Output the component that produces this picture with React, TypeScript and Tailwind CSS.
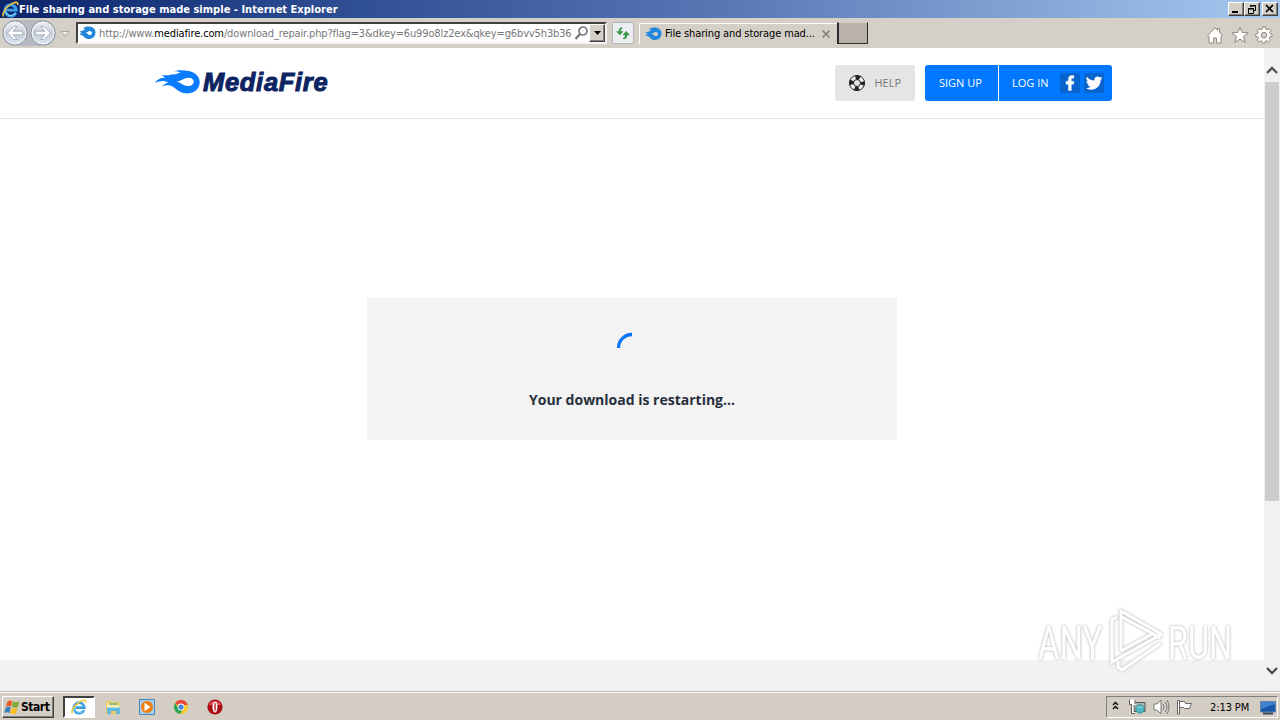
import React from "react";

const ui = "font-['DejaVu_Sans_Condensed','DejaVu_Sans',sans-serif]";

function IELogo({ size = 16 }: { size?: number }) {
  return (
    <svg width={size} height={size} viewBox="0 0 16 16" className="block shrink-0" fill="none">
      <path d="M13 11A5.300 5.300 0 1 1 13.400 8.600H4.500" stroke="#3a9fe4" strokeWidth="2.700" />
      <path d="M12.700 11A5 5 0 0 1 3.600 7" stroke="#8ad4f7" strokeWidth="1" />
      <path d="M1.600 14.500C-.6 12.500 3.200 6.300 8.500 3c3.600-2.300 6.800-2.600 6.300.8" stroke="#efc43d" strokeWidth="1.500" />
    </svg>
  );
}

function Flame({ w, h }: { w: number; h: number }) {
  return (
    <svg width={w} height={h} viewBox="0 0 45 25" className="block shrink-0" preserveAspectRatio="none">
      <path
        fillRule="evenodd"
        fill="#0a7cff"
        d="M16 4.600C20 5.400 23 3.800 25.500 2.400 23.400 1.500 20.200 1 18.200 1.400 22.200-.2 28-.1 32.500.7 39.800 1.900 44.700 6.400 44.700 12.600 44.700 19.500 39.600 24.400 32.500 24.400 25.700 24.400 22.300 20.800 18.600 18 15.500 15.600 11.200 15.300 7.200 17.200 8.700 15 11 13.700 13.500 13.100 9.200 10.600 4.500 11 0 13.500 2.100 9.800 5.800 8.100 10 8.200 8.900 6.900 7.700 6 6.400 5.500 10 4.900 12.700 6.300 16 4.600ZM21.500 11.900C25.200 12.700 28.500 16.600 33 16.600 36.400 16.600 38.700 14.600 38.700 12.200 38.700 9.700 36.700 8 33.600 8 29.500 8 26.400 11.400 21.500 11.900Z"
      />
    </svg>
  );
}

function FlameBadge() {
  return (
    <svg width="17" height="16" viewBox="0 0 17 16" className="block shrink-0">
      <path
        fillRule="evenodd"
        fill="#2186dc"
        d="M4.200 3.200C5.800 1.700 8 1.300 10.400 1.500c3.600.3 6.100 2.700 6.100 6.100 0 3.800-2.800 6.400-6.400 6.400-3.800 0-5-2.500-6.300-3.300C2.700 10 1.700 9.600.4 9.800c.7-1 1.600-1.500 2.600-1.700C2 7.300 1 7 .1 7 2 5.400 4.400 6 6 4.500c-.6-.4-1.100-.8-1.800-1.300ZM7 7.600c1.200.7 1.900 2.500 3.700 2.500 1.300 0 2.200-.9 2.200-2.100 0-1.200-.9-2-2.200-2C9.300 6 8.600 7.400 7 7.600Z"
      />
    </svg>
  );
}

function NavArrow({ flip = false }: { flip?: boolean }) {
  return (
    <svg width="26" height="26" viewBox="0 0 26 26" className="block shrink-0">
      <defs>
        <linearGradient id={flip ? "navF" : "navB"} x1="0" y1="0" x2="0" y2="1">
          <stop offset="0" stopColor="#f4f5f8" />
          <stop offset=".5" stopColor="#c3cbd7" />
          <stop offset="1" stopColor="#dfe8f3" />
        </linearGradient>
      </defs>
      <circle cx="13" cy="13" r="12" fill={flip ? "url(#navF)" : "url(#navB)"} stroke="#8d94a1" />
      <circle cx="13" cy="13" r="10.900" fill="none" stroke="#f4f7fb" strokeWidth="1" />
      <path
        transform={flip ? "translate(26 0) scale(-1 1)" : undefined}
        d="M5.500 13 12 6.500h3.200L11 11.200h9.500v3.600H11l4.200 4.700H12Z"
        fill="#fff"
        stroke="#9aa4b3"
        strokeWidth=".8"
      />
    </svg>
  );
}

function CaptionButton({ children }: { children: React.ReactNode }) {
  return (
    <div className="flex h-[14px] w-4 items-center justify-center border border-t-white border-r-[#404040] border-b-[#404040] border-l-white bg-[#d4d0c8] shadow-[inset_-1px_-1px_0_#808080]">
      {children}
    </div>
  );
}

function TitleBar() {
  return (
    <div className={`flex h-[18px] items-center bg-[linear-gradient(90deg,#0b246a_0%,#25448a_20%,#5575b3_55%,#a6caf0_100%)] pr-[2px] pl-[2px] ${ui}`}>
      <IELogo size={17} />
      <span className="pt-px text-[11px] leading-[17px] font-bold tracking-[0.020px] whitespace-nowrap text-white">
        File sharing and storage made simple - Internet Explorer
      </span>
      <div className="ml-auto flex">
        <CaptionButton>
          <svg width="12" height="10" viewBox="0 0 12 10"><path d="M2 7h6v2H2z" /></svg>
        </CaptionButton>
        <CaptionButton>
          <svg width="12" height="11" viewBox="0 0 12 11" fill="none" stroke="#000">
            <path d="M4.500 3V1.500h5v5H8M4 2h6" /><path d="M2.500 4.500h5v5h-5zM2 5h6" />
          </svg>
        </CaptionButton>
        <div className="ml-[2px]">
          <CaptionButton>
            <svg width="10" height="10" viewBox="0 0 10 10"><path d="m1 1 7 7M8 1 1 8" stroke="#000" strokeWidth="1.700" /></svg>
          </CaptionButton>
        </div>
      </div>
    </div>
  );
}

function Toolbar() {
  return (
    <div className={`flex h-[30px] bg-[#d4d0c8] text-[11px] ${ui}`}>
      <div className="mt-[2px] ml-[2px] flex h-[26px] w-[54px] justify-between rounded-full bg-[#b7b9c0]">
        <NavArrow />
        <NavArrow flip />
      </div>
      <svg width="10" height="6" viewBox="0 0 10 6" className="mt-[13px] ml-[4px]"><path d="M1 .5h8L5 5Z" fill="#eee" stroke="#aaa69f" /></svg>
      <div className="mt-[4px] ml-[6px] flex h-[22px] w-[531px] items-center border-2 border-t-[#404040] border-r-[#f4f3f0] border-b-[#f4f3f0] border-l-[#404040] bg-white pl-px">
        <FlameBadge />
        <div className="ml-[3px] w-[474px] pt-px leading-[18px] tracking-[-0.130px] whitespace-nowrap text-[#77777a]">
          http://www.<span className="text-black">mediafire.com</span>/download_repair.php?flag=3&amp;dkey=6u99o8lz2ex&amp;qkey=g6bvv5h3b36
        </div>
        <svg width="15" height="16" viewBox="0 0 15 16" className="ml-[2px] shrink-0" fill="none" stroke="#77777c">
          <circle cx="9" cy="6" r="4" strokeWidth="1.700" /><path d="m6 9-4.500 5" strokeWidth="2.300" />
        </svg>
        <div className="ml-auto flex h-[18px] w-4 items-center justify-center border border-t-white border-r-[#404040] border-b-[#404040] border-l-white bg-[#d4d0c8] shadow-[inset_-1px_-1px_0_#808080]">
          <svg width="7" height="4" viewBox="0 0 7 4"><path d="M0 0h7L3.500 4Z" /></svg>
        </div>
      </div>
      <div className="mt-[4px] ml-[5px] flex h-[22px] w-[22px] items-center justify-center rounded-[2px] border border-[#b4b5b8] bg-[#eceef1]">
        <svg width="16" height="16" viewBox="0 0 16 16" fill="#319b43" stroke="#1c7630" strokeWidth=".3">
          <path d="M7 2.500C4.800 2.500 4 4 4 6.500H1.500L4.800 10 8 6.500H5.700c0-1.700.2-2.500 1.300-2.700Z" />
          <path d="M8.500 14c2.500 0 3.500-1.500 3.500-4h2.500L11.200 6.200 8 10h2.200c0 1.500-.4 2.500-1.700 2.700Z" />
        </svg>
      </div>
      <div className="mt-[5px] ml-[5px] flex h-[21px] w-[198px] items-center border-t border-l border-white pl-[5px]">
        <FlameBadge />
        <span className="ml-[3px] pt-px tracking-[-0.120px] whitespace-nowrap text-black">File sharing and storage mad...</span>
        <svg width="10" height="10" viewBox="0 0 10 10" className="mr-[6px] ml-auto"><path d="m1.500 1.500 7 7m0-7-7 7" stroke="#85817b" strokeWidth="1.700" /></svg>
      </div>
      <div className="mt-[4px] h-[22px] w-[31px] border border-l-2 border-t-[#d4d0c8] border-r-[#2d2930] border-b-[#2d2930] border-l-[#2d2930] bg-[#b9b2ab]" />
      <div className="mt-[8px] mr-[7px] ml-auto flex gap-[6.500px]">
        <svg width="18" height="18" viewBox="0 0 18 18" fill="#fffefa" stroke="#8d8984">
          <path d="M1.500 9.500 9 1.800l2.500 2.500V2.500h2v3.800l3 3.200-1.500 1V17h-4.500v-5h-3v5H3v-6.500Z" strokeLinejoin="round" />
        </svg>
        <svg width="18" height="18" viewBox="0 0 18 18" fill="#fffefa" stroke="#8d8984">
          <path d="m9 1 2.200 5.500 5.900.3-4.500 3.800 1.500 5.800L9 13.200l-5.100 3.200 1.500-5.800L.9 6.800l5.900-.3Z" />
        </svg>
        <svg width="18" height="18" viewBox="0 0 18 18">
          <path d="m7.500 1 3 0 .4 2.200 1.500.7 1.900-1.300 1.700 1.900-1.300 1.900.6 1.300L17 8v2.400l-2.200.5-.6 1.300 1.200 1.800-1.800 1.900-1.800-1.200-1.500.6-.4 1.900H7.500l-.4-1.900-1.400-.6-1.900 1.200L2 14.200l1.300-1.900-.6-1.400L.8 10.500V8l2-.5.600-1.300L2.100 4.400 4 2.600l1.800 1.300 1.300-.7Z" fill="#fffefa" stroke="#8d8984" />
          <circle cx="9" cy="9.200" r="2.800" fill="#d4d0c8" stroke="#8d8984" />
        </svg>
      </div>
    </div>
  );
}

function HelpIcon() {
  return (
    <svg width="18" height="18" viewBox="0 0 18 18" fill="none">
      <circle cx="9" cy="9" r="5.600" stroke="#f1f1f1" strokeWidth="4" />
      <circle cx="9" cy="9" r="5.500" stroke="#252525" strokeWidth="4.200" strokeDasharray="4.320 4.320" strokeDashoffset="2.160" />
      <circle cx="9" cy="9" r="7.600" stroke="#252525" strokeWidth="1" />
      <circle cx="9" cy="9" r="3.500" stroke="#252525" strokeWidth="1" />
    </svg>
  );
}

function SiteHeader() {
  return (
    <header className="flex h-[71px] shrink-0 border-b border-[#e4e4e6] pl-[155px] font-['Open_Sans',sans-serif] text-[11px]">
      <div className="flex w-[680px] pt-[22px]">
        <Flame w={45} h={24} />
        <span className="ml-[3px] h-[25px] font-['Liberation_Sans',sans-serif] text-[25.500px] leading-[25px] font-bold tracking-[0.700px] text-[#0c2461] italic [-webkit-text-stroke:1px_#0c2461]">MediaFire</span>
      </div>
      <div className="mt-[17px] flex h-9 w-20 items-center rounded-[3px] bg-[#e5e5e5] pl-[13px] text-[#777]">
        <HelpIcon />
        <span className="ml-[8.500px]">HELP</span>
      </div>
      <div className="mt-[17px] ml-[10px] flex h-9 w-[187px] items-center rounded-[3px] bg-[#0077ff] text-white">
        <span className="flex h-full w-[74px] items-center border-r border-white pl-[14px]">SIGN UP</span>
        <span className="ml-[13px] w-[48px]">LOG IN</span>
        <svg width="20" height="20" viewBox="0 0 20 20">
          <rect width="20" height="20" rx="2" fill="#0863cc" />
          <path fill="#fff" stroke="#fff" strokeWidth=".4" d="M8.400 17.500v-6.300H6V8.300h2.400V6.500c0-2.800 1.200-4 3.700-4h1.700v2.800h-1.200c-1 0-1.300.4-1.300 1.300v1.700h2.600l-.4 2.900h-2.200v6.300Z" />
        </svg>
        <svg width="20" height="20" viewBox="0 0 20 20" className="ml-[4px]">
          <rect width="20" height="20" rx="2" fill="#0863cc" />
          <path fill="#fff" d="M18.500 5.200c-.6.300-1.300.5-1.900.5.700-.4 1.200-1.100 1.500-1.900-.7.400-1.400.7-2.100.8-2.200-2.300-6.200-.5-5.600 3C7.300 7.400 4.700 6 2.800 3.800c-.8 1.500-.4 3.500 1.100 4.500-.5 0-1.100-.2-1.500-.4 0 1.700 1.100 3 2.700 3.400-.5.100-1 .1-1.500 0 .4 1.400 1.700 2.300 3.100 2.300-1.400 1.100-3.300 1.700-5 1.500 6.700 4.300 15.300-.4 14.900-8 .8-.5 1.400-1.200 1.900-1.900Z" />
        </svg>
      </div>
    </header>
  );
}

function Watermark() {
  return (
    <div className="absolute top-[558px] left-[1038px] flex h-[70px] w-[200px] items-center font-['Roboto',sans-serif] text-[47px] leading-none font-normal text-white [filter:drop-shadow(0_0_1px_#c4c4c4)_drop-shadow(0_0_1px_#dddddd)]">
      <span className="w-[68px] shrink-0 pt-[2px]"><span className="inline-block origin-left scale-x-[0.7]">ANY</span></span>
      <svg width="62" height="68" viewBox="0 0 62 68" className="shrink-0" fill="none" stroke="#fff" strokeWidth="3">
        <path d="M15 44V4l40 23-2 3L16 10" />
        <path d="M11 10 6 13v42l50-28M12 54v6l4 3 39-27M15 44l33-18" />
      </svg>
      <span className="w-[68px] shrink-0 pt-[2px]"><span className="inline-block origin-left scale-x-[0.69]">RUN</span></span>
    </div>
  );
}

function Page() {
  return (
    <div className="relative flex h-[643px]">
      <div className="flex w-[1264px] flex-col bg-white">
        <SiteHeader />
        <main className="flex h-[541px] shrink-0 justify-center pt-[179px]">
          <section className="flex h-[142px] w-[530px] flex-col items-center bg-[#f3f3f3] pt-[34px]">
            <svg width="32" height="32" viewBox="0 0 32 32" fill="none"><path d="M2.500 16A13.500 13.500 0 0 1 16 2.500" stroke="#0878f8" strokeWidth="3.300" /></svg>
            <p className="mt-[26px] font-['Open_Sans',sans-serif] text-[14px] leading-5 font-bold text-[#282f3d]">Your download is restarting...</p>
          </section>
        </main>
        <footer className="h-[31px] bg-[#f2f2f2]" />
      </div>
      <div className="flex w-4 flex-col items-center bg-[#f1f1f1]">
        <svg width="12" height="8" viewBox="0 0 12 8" className="mt-[18px] shrink-0"><path d="m1 7 5-5 5 5" fill="none" stroke="#505050" strokeWidth="2.300" /></svg>
        <div className="mt-[8px] h-[419px] w-[14px] shrink-0 bg-[#cdcdcd]" />
        <svg width="12" height="8" viewBox="0 0 12 8" className="mt-auto mb-[16px] shrink-0"><path d="m1 1 5 5 5-5" fill="none" stroke="#505050" strokeWidth="2.300" /></svg>
      </div>
      <Watermark />
    </div>
  );
}

function WindowsFlag() {
  return (
    <svg width="16" height="16" viewBox="0 0 16 16" className="shrink-0">
      <path d="M3.500 2.500C5.500 1 7 1.300 8.500 2L7 7.500C5.500 6.700 4 6.800 2 7.800Z" fill="#ed5b2d" />
      <path d="M9.300 2.500c2 .9 4 .7 6-.3L13.800 8c-2 .9-4 .8-6-.2Z" fill="#7eae35" />
      <path d="M1.700 8.700c2-1.200 3.500-1.100 5-.2L5.300 14c-2-1-3.500-.8-5.100.1Z" fill="#367fc2" />
      <path d="M7.500 8.700c2 1 4 1.100 6 .1L12 14.500c-2 .9-4 .8-6-.2Z" fill="#f7bf27" />
    </svg>
  );
}

function Taskbar() {
  return (
    <div className={`flex h-[29px] border-t border-[#bdb9b3] bg-[#d4cdc4] text-[11px] text-black shadow-[inset_0_1px_0_#fff] ${ui}`}>
      <div className="mt-[4px] ml-[2px] flex h-[22px] w-[52px] items-center border border-t-white border-r-[#404040] border-b-[#404040] border-l-white pl-px shadow-[inset_-1px_-1px_0_#808080]">
        <WindowsFlag />
        <span className="ml-px text-[12px] font-bold tracking-[-0.450px]">Start</span>
      </div>
      <div className="mt-[4px] ml-[9px] flex h-[22px] w-8 items-center justify-center border-2 border-t-[#404040] border-r-white border-b-white border-l-[#404040] bg-white">
        <IELogo />
      </div>
      <svg width="16" height="16" viewBox="0 0 16 16" className="mt-[7px] ml-[10px]">
        <path d="M1 2h5l1 1h8v12H1Z" fill="#e9cb66" /><path d="M2 4h12v6H2Z" fill="#fbedaa" /><path d="M4 5h9" stroke="#75ac68" strokeWidth="1.500" />
        <path d="M2 8h13v7h-4v-3H6v3H2Z" fill="#62b8df" /><path d="M2 8.500h13" stroke="#a8def1" />
      </svg>
      <svg width="16" height="16" viewBox="0 0 16 16" className="mt-[7px] ml-[18px]">
        <path d="M.5.500h15v15H.5Z" fill="#a8cef0" stroke="#5085bb" /><circle cx="8" cy="8" r="6" fill="#f17d0c" /><path d="m5.500 3.800 6 4.200-6 4.200Z" fill="#fff" />
      </svg>
      <svg width="16" height="16" viewBox="0 0 16 16" className="mt-[7px] ml-[18px]">
        <circle cx="8" cy="8" r="7" fill="#f8c928" /><path d="M8 8 2 4.300A7 7 0 0 1 14.700 6H8Z" fill="#e7443a" />
        <path d="M2 4.300A7 7 0 0 0 7.200 15L10 9.500 5.500 9Z" fill="#2aa65a" /><circle cx="8" cy="8" r="3.400" fill="#fff" /><circle cx="8" cy="8" r="2.600" fill="#4587dc" />
      </svg>
      <svg width="16" height="16" viewBox="0 0 16 16" className="mt-[7px] ml-[17.500px]">
        <circle cx="8" cy="8" r="7.600" fill="#a90d14" /><path d="M2 6a6.500 6.500 0 0 1 12 0Z" fill="#df565a" /><ellipse cx="8" cy="8" rx="2.500" ry="5.500" fill="#fff" /><ellipse cx="8" cy="8" rx=".7" ry="4.500" fill="#b31118" />
      </svg>
      <div className="mt-[4px] mr-[2px] ml-auto flex h-[22px] w-[172px] border border-t-[#808080] border-r-white border-b-white border-l-[#808080] pt-[2px]">
        <svg width="7" height="10" viewBox="0 0 7 10" className="mt-[2px] ml-[5px]" fill="none" stroke="#000" strokeWidth="1.300"><path d="m1 4 2.500-2.500L6 4M1 8l2.500-2.500L6 8" /></svg>
        <svg width="17" height="16" viewBox="0 0 17 16" className="ml-[10px]" fill="none">
          <path d="M5 3.500h11v9H5Z" fill="#a9b6b4" stroke="#555" /><path d="M1.500 1v4h4V1M3.500 5v9H6M3.500 0v4" stroke="#fff" strokeWidth="2" /><path d="M.5 1v4.500h2v9H6M6 1v4" stroke="#585858" />
          <circle cx="11" cy="10" r="4.300" fill="#4db5bf" stroke="#397f86" strokeWidth=".7" /><path d="M8 9c2-3 4 2 6-2" stroke="#b3e7e8" />
        </svg>
        <svg width="17" height="16" viewBox="0 0 17 16" className="ml-[7px]" fill="none" stroke="#777"><path d="M1 5h3l4-4v14l-4-4H1Z" fill="#fff" /><path d="M10 5q2 3 0 6m2-8q4 5 0 10m2-12q4 7 0 14" /></svg>
        <svg width="17" height="16" viewBox="0 0 17 16" className="ml-[6px]" fill="#fff" stroke="#666"><path d="M1.500 15V1.500h2V15Zm2-12.500h5l1 2h6l-2 5h-5l-1-1h-4Z" /></svg>
        <span className="mt-px ml-[17px] leading-4 tracking-[-0.100px] whitespace-nowrap">2:13 PM</span>
        <svg width="16" height="14" viewBox="0 0 16 14" className="mt-[2px] mr-px ml-auto"><path d="M.5.500h15v10.500H.5Z" fill="#1656ad" stroke="#66809f" /><path d="M1 8 15 3V1H1Z" fill="#3f83d2" /><path d="M3 12.500h10" stroke="#33445c" strokeWidth="2" /></svg>
      </div>
    </div>
  );
}

export default function App() {
  return (
    <div className="h-[720px] w-[1280px] overflow-hidden bg-white">
      <TitleBar />
      <Toolbar />
      <Page />
      <Taskbar />
    </div>
  );
}
